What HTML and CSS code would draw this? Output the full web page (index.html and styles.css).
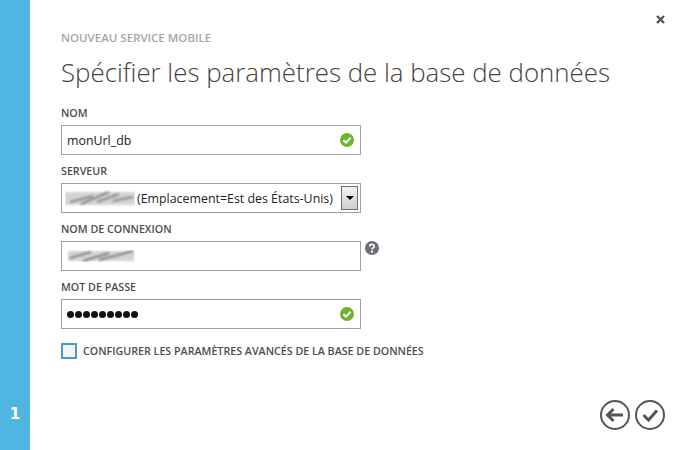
FILE: index.html
```html
<!DOCTYPE html>
<html lang="fr">
<head>
    <meta charset="UTF-8">
    <title>Nouveau service mobile</title>
    <link rel="stylesheet" href="styles.css">
</head>
<body>
    <div class="sidebar">
        <span class="step">1</span>
    </div>
    <div class="wizard">
        <svg class="close" width="9" height="9" viewBox="0 0 9 9">
            <path d="M1 1L8 8M8 1L1 8" stroke="#555" stroke-width="2.4" fill="none"/>
        </svg>
        <div class="kicker">NOUVEAU SERVICE MOBILE</div>
        <h1>Spécifier les paramètres de la base de données</h1>
        <form class="fields">
            <div class="field">
                <label>NOM</label>
                <div class="box">
                    <span class="value">monUrl_db</span>
                    <svg class="ok" width="14" height="14" viewBox="0 0 14 14">
                        <circle cx="7" cy="7" r="7" fill="#6fb52c"/>
                        <path d="M3.4 7.2L6 9.7L10.6 4.8" stroke="#fff" stroke-width="2" fill="none"/>
                    </svg>
                </div>
            </div>
            <div class="field">
                <label>SERVEUR</label>
                <div class="box select-box">
                    <svg class="smudge" width="70" height="17" viewBox="0 0 70 17">
                        <rect x="0" y="2" width="70" height="13" fill="#d4d4d4" filter="url(#soft)"/>
                        <path d="M5 12L28 6M16 14L44 2M32 12L54 4M48 11L68 7" stroke="#888" stroke-width="2" filter="url(#soft)"/>
                    </svg>
                    <span class="value">(Emplacement=Est des États-Unis)</span>
                    <span class="drop"><span class="arrow"></span></span>
                </div>
            </div>
            <div class="field">
                <label>NOM DE CONNEXION</label>
                <div class="row">
                    <div class="box">
                        <svg class="smudge" width="68" height="16" viewBox="0 0 68 16">
                            <rect x="1" y="3" width="66" height="10" fill="#d4d4d4" filter="url(#soft)"/>
                            <path d="M3 10L24 4M16 13L42 5M32 12L66 3" stroke="#808080" stroke-width="2" filter="url(#soft)"/>
                        </svg>
                    </div>
                    <svg class="help" width="14" height="14" viewBox="0 0 14 14">
                        <circle cx="7" cy="7" r="7" fill="#6b6f76"/>
                        <path d="M4.8 5.4C4.8 2.7 9.3 2.8 9.3 5.2C9.3 6.8 7 6.8 7 8.6" stroke="#fff" stroke-width="1.7" fill="none"/>
                        <rect x="6" y="9.6" width="2" height="2" fill="#fff"/>
                    </svg>
                </div>
            </div>
            <div class="field">
                <label>MOT DE PASSE</label>
                <div class="box">
                    <span class="dots">
                        <i></i><i></i><i></i><i></i><i></i><i></i><i></i><i></i><i></i>
                    </span>
                    <svg class="ok" width="14" height="14" viewBox="0 0 14 14">
                        <circle cx="7" cy="7" r="7" fill="#6fb52c"/>
                        <path d="M3.4 7.2L6 9.7L10.6 4.8" stroke="#fff" stroke-width="2" fill="none"/>
                    </svg>
                </div>
            </div>
            <div class="check-row">
                <span class="checkbox"></span>
                <span class="check-label">CONFIGURER LES PARAMÈTRES AVANCÉS DE LA BASE DE DONNÉES</span>
            </div>
        </form>
        <div class="nav">
            <svg width="30" height="30" viewBox="0 0 30 30">
                <circle cx="15" cy="15" r="14" stroke="#555" stroke-width="2" fill="none"/>
                <path d="M13.5 9L7.5 15L13.5 21M8.5 15H23" stroke="#555" stroke-width="3" fill="none"/>
            </svg>
            <svg width="30" height="30" viewBox="0 0 30 30">
                <circle cx="15" cy="15" r="14" stroke="#555" stroke-width="2" fill="none"/>
                <path d="M8.5 15L13.5 20L22 10.5" stroke="#555" stroke-width="3" fill="none"/>
            </svg>
        </div>
    </div>
    <svg class="defs" width="0" height="0">
        <filter id="soft"><feGaussianBlur stdDeviation="1"/></filter>
    </svg>
</body>
</html>
```

FILE: styles.css
```css
html, body {
    height: 100%;
}

body {
    margin: 0;
    display: flex;
    background: #fff;
    font-family: "Open Sans", "Noto Sans", sans-serif;
    color: #333;
    overflow: hidden;
}

.sidebar {
    width: 30px;
    flex-shrink: 0;
    background: #51b5e2;
    display: flex;
    align-items: flex-end;
    justify-content: center;
}

.step {
    color: #fff;
    font-family: "DejaVu Sans", sans-serif;
    font-size: 15px;
    font-weight: bold;
    margin-bottom: 27px;
}

.wizard {
    position: relative;
    flex: 1;
    display: flex;
    flex-direction: column;
    padding: 30px 15px 20px 31px;
}

.close {
    position: absolute;
    top: 15px;
    right: 15px;
}

.kicker {
    font-size: 11.5px;
    font-weight: 600;
    line-height: 15px;
    color: #a6a6a6;
}

h1 {
    margin: 9px 0 0;
    font-size: 25.85px;
    font-weight: 300;
    line-height: 36px;
    color: #444;
    white-space: nowrap;
}

.fields {
    display: flex;
    flex-direction: column;
    margin-top: 15px;
}

.field {
    display: flex;
    flex-direction: column;
    height: 58px;
}

label {
    font-size: 10.7px;
    font-weight: 600;
    line-height: 14px;
    height: 14px;
    margin-top: 1px;
    margin-bottom: 5px;
    color: #4d4d4d;
}

.box {
    box-sizing: border-box;
    width: 300px;
    height: 30px;
    border: 1px solid #a0a0a0;
    display: flex;
    align-items: center;
    padding: 0 6px 0 5px;
    flex-shrink: 0;
}

.value {
    font-size: 12.4px;
    color: #222;
    white-space: nowrap;
}

.ok {
    margin-left: auto;
}

.select-box {
    padding-left: 3px;
    padding-right: 2px;
}

.smudge {
    flex-shrink: 0;
}

.select-box .value {
    margin-left: 2px;
}

.drop {
    box-sizing: border-box;
    margin-left: auto;
    width: 17px;
    height: 24px;
    border: 1px solid #707070;
    background: linear-gradient(#f2f2f2, #cfcfcf);
    display: flex;
    align-items: center;
    justify-content: center;
}

.arrow {
    width: 0;
    height: 0;
    border-left: 4px solid transparent;
    border-right: 4px solid transparent;
    border-top: 4px solid #000;
}

.row {
    display: flex;
    align-items: flex-start;
    gap: 4px;
}

.help {
    margin-top: 0;
}

.dots {
    display: flex;
    gap: 1px;
}

.dots i {
    width: 7px;
    height: 7px;
    border-radius: 50%;
    background: #111;
}

.check-row {
    display: flex;
    align-items: center;
    gap: 6px;
    margin-top: 6px;
}

.checkbox {
    box-sizing: border-box;
    width: 16px;
    height: 16px;
    border: 2px solid #4a9bcb;
    background: #f3f3f3;
}

.check-label {
    font-size: 10.7px;
    font-weight: 600;
    color: #4d4d4d;
    white-space: nowrap;
}

.nav {
    margin-top: auto;
    align-self: flex-end;
    display: flex;
    gap: 5px;
}

.defs {
    position: absolute;
}
```
